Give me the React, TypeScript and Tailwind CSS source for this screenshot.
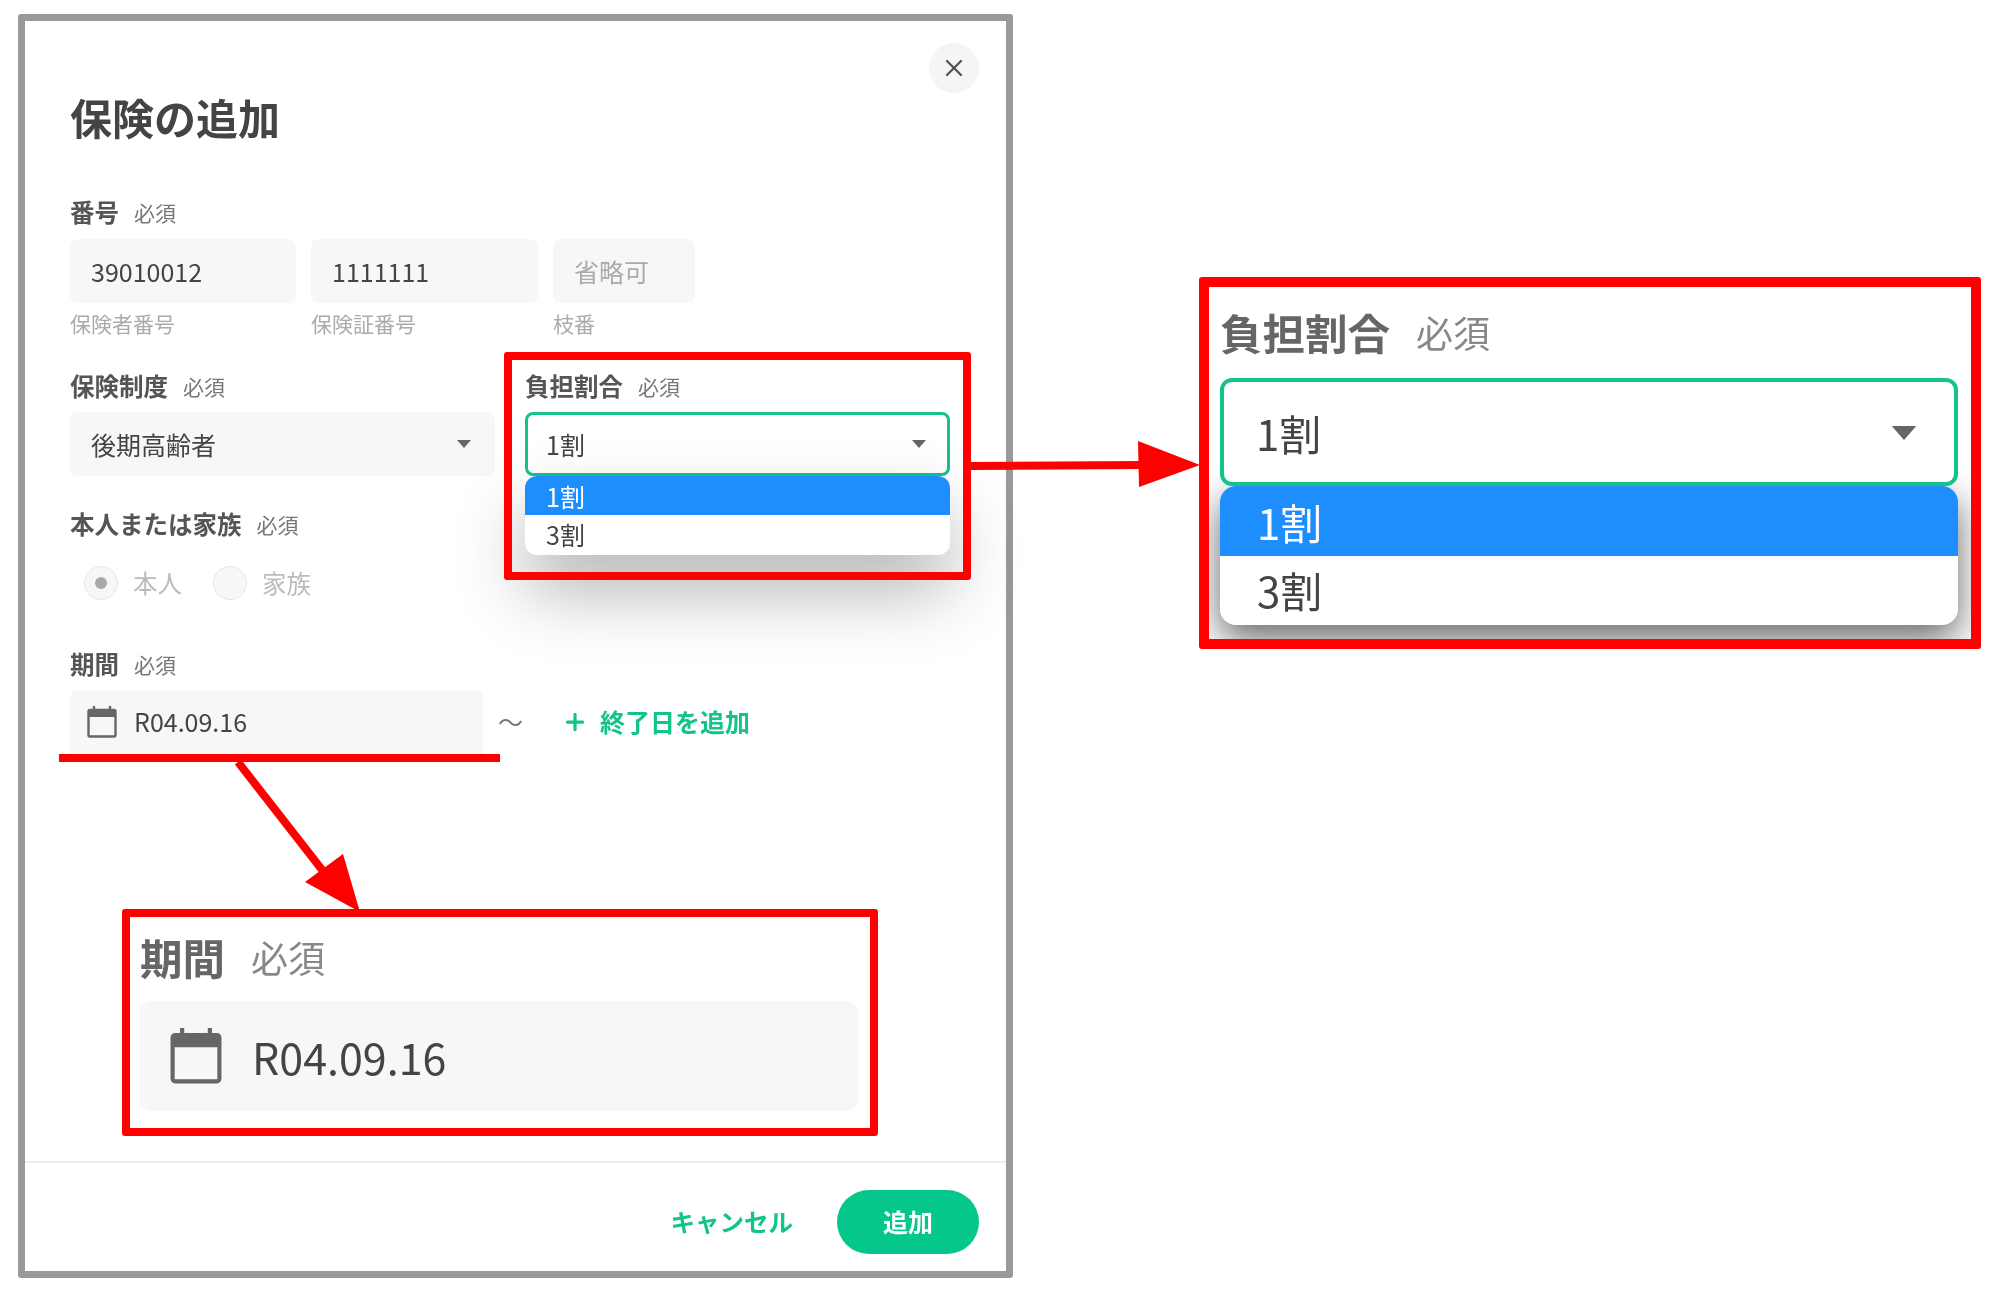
import React from "react";
import { X, Plus } from "lucide-react";

const font = { fontFamily: '"Noto Sans CJK JP", "Noto Sans", sans-serif' };

function Calendar({ className }: { className: string }) {
  return (
    <svg viewBox="0 0 30 32" className={className} fill="none" preserveAspectRatio="none">
      <path d="M7 0v5M23 0v5" stroke="#666" strokeWidth="2.4" />
      <rect x="1.5" y="4" width="27" height="26.5" rx="1.5" stroke="#666" strokeWidth="2.4" fill="none" />
      <rect x="1.5" y="4" width="27" height="7" fill="#666" />
    </svg>
  );
}

function Caret({ className }: { className: string }) {
  return (
    <svg viewBox="0 0 14 8" className={className}>
      <path d="M0 0h14L7 8z" fill="#666" />
    </svg>
  );
}

function Label({ title, className = "" }: { title: string; className?: string }) {
  return (
    <div className={`flex h-[30px] items-center gap-[15px] ${className}`}>
      <span className="text-[24.5px] leading-[30px] font-bold text-[#555]">{title}</span>
      <span className="text-[21px] leading-[30px] text-[#777]">必須</span>
    </div>
  );
}

function TextBox({ w, text, hint, muted }: { w: string; text: string; hint: string; muted?: boolean }) {
  return (
    <div className={`flex flex-col ${w}`}>
      <div className={`flex h-[64px] items-center rounded-lg bg-[#f7f7f7] pl-[21px] pt-[2px] text-[25px] ${muted ? "text-[#aaa]" : "text-[#444]"}`}>
        {text}
      </div>
      <div className="mt-[7px] h-[26px] text-[21px] leading-[26px] text-[#aaa]">{hint}</div>
    </div>
  );
}

function Radio({ checked, label }: { checked?: boolean; label: string }) {
  return (
    <div className="flex items-center gap-[15px]">
      <span className="flex h-[34px] w-[34px] items-center justify-center rounded-full border border-[#e6e6e6] bg-[#f7f7f7]">
        {checked && <span className="h-[12px] w-[12px] rounded-full bg-[#aaa]" />}
      </span>
      <span className="text-[24.5px] leading-[34px] text-[#bbb]">{label}</span>
    </div>
  );
}

export default function App() {
  return (
    <div style={font} className="relative h-[1293px] w-[2000px] overflow-hidden bg-white pl-[18px] pt-[14px] blur-[0.6px]">
      {/* dialog */}
      <div className="flex h-[1264px] w-[995px] flex-col rounded-[3px] border-[7px] border-[#999] bg-white">
        <div className="flex justify-end pr-[27px] pt-[22px]">
          <div className="flex h-[50px] w-[50px] items-center justify-center rounded-full bg-[#f5f5f5]">
            <X className="h-[28px] w-[28px] text-[#555]" strokeWidth={2} />
          </div>
        </div>

        <div className="flex flex-1 flex-col px-[45px]">
          <h1 className="mt-[-1px] text-[42px] leading-[50px] font-bold text-[#444]">保険の追加</h1>

          <Label title="番号" className="mt-[55px]" />
          <div className="mt-[12px] flex gap-[15px]">
            <TextBox w="w-[226px]" text="39010012" hint="保険者番号" />
            <TextBox w="w-[227px]" text="1111111" hint="保険証番号" />
            <TextBox w="w-[142px]" text="省略可" hint="枝番" muted />
          </div>

          <div className="mt-[35px] flex gap-[30px]">
            <div className="w-[425px]">
              <Label title="保険制度" />
              <div className="mt-[11px] flex h-[64px] items-center justify-between rounded-lg bg-[#f7f7f7] pl-[21px] pr-[24px] text-[25px] text-[#444]">
                <span className="pt-[2px]">後期高齢者</span>
                <Caret className="h-[8px] w-[14px]" />
              </div>
            </div>

            <div className="relative z-10 w-[425px]">
              <Label title="負担割合" />
              <div className="relative mt-[11px] flex h-[64px] items-center justify-between rounded-lg border-[3px] border-[#12c48b] bg-white pl-[18px] pr-[21px] text-[25px] text-[#444]">
                <span className="pt-[2px]">1割</span>
                <Caret className="h-[8px] w-[14px]" />
                <div className="absolute left-[-3px] right-[-3px] top-[61px] overflow-hidden rounded-xl bg-white text-[25px] shadow-[0_36px_70px_rgba(0,0,0,0.3)]">
                  <div className="flex h-[39px] items-center bg-[#1e8eff] pl-[21px] pt-[2px] text-white">1割</div>
                  <div className="flex h-[40px] items-center pl-[21px] text-[#444]">3割</div>
                </div>
              </div>
              <div className="pointer-events-none absolute bottom-[-104px] left-[-21px] right-[-21px] top-[-19px] rounded-[3px] border-[8px] border-[#ff0000]" />
            </div>
          </div>

          <Label title="本人または家族" className="mt-[33px]" />
          <div className="mt-[27px] ml-[14px] flex gap-[31px]">
            <Radio checked label="本人" />
            <Radio label="家族" />
          </div>

          <Label title="期間" className="mt-[49px]" />
          <div className="mt-[11px] flex h-[64px] items-center">
            <div className="relative flex h-[64px] w-[413px] items-center gap-[17px] rounded-t-lg bg-[#f7f7f7] pl-[17px] text-[25px] text-[#444]">
              <Calendar className="h-[32px] w-[30px]" />
              <span>R04.09.16</span>
              <div className="absolute left-[-11px] right-[-17px] top-full h-[8px] bg-[#ff0000]" />
            </div>
            <span className="ml-[15px] text-[25px] text-[#777]">〜</span>
            <div className="ml-[39px] flex items-center gap-[12px] text-[25px] font-bold text-[#12c48b]">
              <Plus className="h-[26px] w-[26px]" strokeWidth={3} />
              <span>終了日を追加</span>
            </div>
          </div>
        </div>

        <div className="flex h-[110px] items-start justify-end gap-[44px] border-t-2 border-[#eeeeee] pr-[27px] pt-[27px]">
          <span className="text-[24.5px] leading-[64px] font-bold text-[#12c48b]">キャンセル</span>
          <span className="flex h-[64px] w-[142px] items-center justify-center rounded-full bg-[#05c78b] text-[25px] font-bold text-white">追加</span>
        </div>
      </div>

      {/* annotation arrows */}
      <svg className="absolute left-0 top-0 h-[1293px] w-[2000px] pointer-events-none" viewBox="0 0 2000 1293">
        <path d="M971 466L1145 465" stroke="#ff0000" strokeWidth="8" />
        <path d="M1138 441L1200 465L1139 487z" fill="#ff0000" />
        <path d="M238 762L330 880" stroke="#ff0000" strokeWidth="8" />
        <path d="M305 882L343 854L360 912z" fill="#ff0000" />
      </svg>

      {/* zoomed callout: period */}
      <div className="absolute left-[122px] top-[909px] h-[227px] w-[756px] rounded-[3px] border-[8px] border-[#ff0000] bg-white px-[10px] pt-[15px]">
        <div className="flex h-[50px] items-center gap-[26px]">
          <span className="text-[42.5px] leading-[50px] font-bold text-[#666]">期間</span>
          <span className="text-[37px] leading-[50px] text-[#888]">必須</span>
        </div>
        <div className="mt-[19px] flex h-[110px] w-[718px] items-center gap-[30px] rounded-xl bg-[#f7f7f7] pl-[30px] text-[43px] text-[#444]">
          <Calendar className="h-[56px] w-[52px]" />
          <span>R04.09.16</span>
        </div>
      </div>

      {/* zoomed callout: ratio */}
      <div className="absolute left-[1199px] top-[277px] h-[372px] w-[782px] overflow-hidden rounded-[3px] border-[10px] border-[#ff0000] bg-white px-[11px] pt-[20px]">
        <div className="flex h-[50px] items-center gap-[26px]">
          <span className="text-[42.5px] leading-[50px] font-bold text-[#666]">負担割合</span>
          <span className="text-[37px] leading-[50px] text-[#888]">必須</span>
        </div>
        <div className="relative mt-[21px] flex h-[108px] w-[738px] items-center justify-between rounded-xl border-4 border-[#12c48b] bg-white pl-[32px] pr-[37px] text-[42px] text-[#444]">
          <span>1割</span>
          <Caret className="mt-[2px] h-[14px] w-[26px]" />
        </div>
        <div className="w-[738px] overflow-hidden rounded-2xl bg-white text-[42px] shadow-[0_14px_36px_rgba(0,0,0,0.6)]">
          <div className="flex h-[70px] items-center bg-[#1e8eff] pl-[37px] text-white">1割</div>
          <div className="flex h-[69px] items-center pl-[37px] pb-[2px] text-[#444]">3割</div>
        </div>
      </div>
    </div>
  );
}
